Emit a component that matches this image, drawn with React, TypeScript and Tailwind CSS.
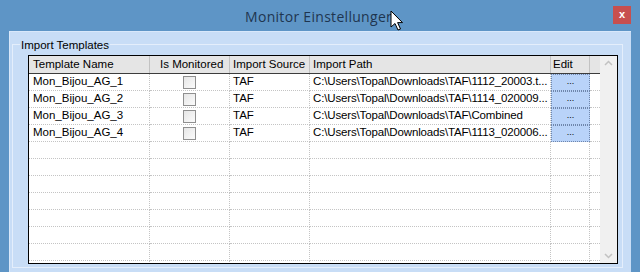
import { Fragment } from "react";

const rows = [
  { name: "Mon_Bijou_AG_1", source: "TAF", path: "C:\\Users\\Topal\\Downloads\\TAF\\1112_20003.t..." },
  { name: "Mon_Bijou_AG_2", source: "TAF", path: "C:\\Users\\Topal\\Downloads\\TAF\\1114_020009..." },
  { name: "Mon_Bijou_AG_3", source: "TAF", path: "C:\\Users\\Topal\\Downloads\\TAF\\Combined" },
  { name: "Mon_Bijou_AG_4", source: "TAF", path: "C:\\Users\\Topal\\Downloads\\TAF\\1113_020006..." },
];

const emptyRows = Array.from({ length: 8 });

function Checkbox() {
  return (
    <div className="w-[13px] h-[13px] border border-[#8f8f8f] bg-gradient-to-br from-[#e6e6e6] to-[#fbfbfb]" />
  );
}

function Cursor() {
  return (
    <svg className="absolute left-[390px] top-[10px]" width="14" height="22" viewBox="0 0 14 22">
      <path
        d="M1 1 L1 17 L5 13.5 L8 20 L10.5 19 L7.6 12.6 L12.5 12.6 Z"
        fill="#fff"
        stroke="#000"
        strokeWidth="1"
        strokeLinejoin="round"
      />
    </svg>
  );
}

export default function App() {
  const cell = "h-[17px] border-b border-r border-dotted border-[#c4c4c4] flex items-center overflow-hidden whitespace-nowrap";
  return (
    <div
      className="w-[640px] h-[272px] bg-[#5e95c6] flex flex-col overflow-hidden relative"
      style={{ fontFamily: "'Liberation Sans', Arial, sans-serif" }}
    >
      {/* Titelleiste */}
      <div className="h-[31px] flex items-center justify-center relative">
        <span
          className="text-[14px] text-[#1e3550] tracking-[0.3px] pt-[1px]"
          style={{ fontFamily: "'Open Sans', 'Noto Sans', sans-serif" }}
        >
          Monitor Einstellungen
        </span>
        <div className="absolute right-[9px] top-[6px] w-[18px] h-[18px] bg-[#c74f4f] flex items-center justify-center">
          <span className="text-white text-[11px] font-bold leading-none pb-[2px]">x</span>
        </div>
      </div>
      <Cursor />

      {/* Client-Bereich */}
      <div className="flex-1 min-h-0 mx-[9px] bg-[#c8ddf6] border-l border-t border-[#d9e8fa] flex flex-col">
        <div className="relative mt-[12px] ml-[2px] mr-[8px] mb-[4px] flex-1 min-h-0 border border-[#e4eefb] flex flex-col pl-[15px] pr-[4px] pt-[10px] pb-[3px]">
          <span className="absolute left-[7px] -top-[7px] px-[1px] bg-[#c8ddf6] text-[11.5px] text-black leading-[14px]">
            Import Templates
          </span>

          {/* Tabelle */}
          <div className="flex-1 min-h-0 border border-black bg-white flex overflow-hidden text-[11.5px] text-black">
            <div className="flex-1 flex flex-col overflow-hidden">
              <div className="h-[18px] shrink-0 flex bg-[#e5e5e5] border-b border-[#3c3c3c]">
                <div className="w-[121px] pl-[4px] flex items-center border-r border-[#c2c2c2]">Template Name</div>
                <div className="w-[80px] pl-[10px] flex items-center border-r border-[#c2c2c2]">Is Monitored</div>
                <div className="w-[80px] pl-[3px] flex items-center border-r border-[#c2c2c2]">Import Source</div>
                <div className="w-[241px] pl-[3px] flex items-center border-r border-[#c2c2c2]">Import Path</div>
                <div className="w-[39px] pl-[2px] flex items-center border-r border-[#c2c2c2]">Edit</div>
                <div className="flex-1" />
              </div>
              <div className="flex flex-col">
                {rows.map((r) => (
                  <div key={r.name} className="flex shrink-0">
                    <div className={`${cell} w-[121px] pl-[4px]`}>{r.name}</div>
                    <div className={`${cell} w-[80px] justify-center`}>
                      <Checkbox />
                    </div>
                    <div className={`${cell} w-[80px] pl-[3px]`}>{r.source}</div>
                    <div className={`${cell} w-[241px] pl-[3px]`}>
                      <span className="tracking-[-0.15px]">{r.path}</span>
                    </div>
                    <div className="w-[39px] h-[17px] border border-dotted border-[#6f86ab] bg-[#b9d3f9] flex items-center justify-center">
                      <span className="text-[9px] leading-none pb-[2px]">...</span>
                    </div>
                    <div className={`${cell} flex-1 border-r-0`} />
                  </div>
                ))}
                {emptyRows.map((_, i) => (
                  <Fragment key={i}>
                    <div className="flex shrink-0">
                      <div className={`${cell} w-[121px]`} />
                      <div className={`${cell} w-[80px]`} />
                      <div className={`${cell} w-[80px]`} />
                      <div className={`${cell} w-[241px]`} />
                      <div className={`${cell} w-[39px]`} />
                      <div className={`${cell} flex-1 border-r-0`} />
                    </div>
                  </Fragment>
                ))}
              </div>
            </div>

            {/* Scrollleiste */}
            <div className="w-[17px] bg-[#f0f0f0] flex flex-col items-center justify-between py-[4px]">
              <svg width="9" height="6" viewBox="0 0 9 6">
                <path d="M1 5 L4.5 1.5 L8 5" fill="none" stroke="#c2c2c2" strokeWidth="1.5" />
              </svg>
              <svg width="9" height="6" viewBox="0 0 9 6">
                <path d="M1 1 L4.5 4.5 L8 1" fill="none" stroke="#c2c2c2" strokeWidth="1.5" />
              </svg>
            </div>
          </div>
        </div>
      </div>
    </div>
  );
}
